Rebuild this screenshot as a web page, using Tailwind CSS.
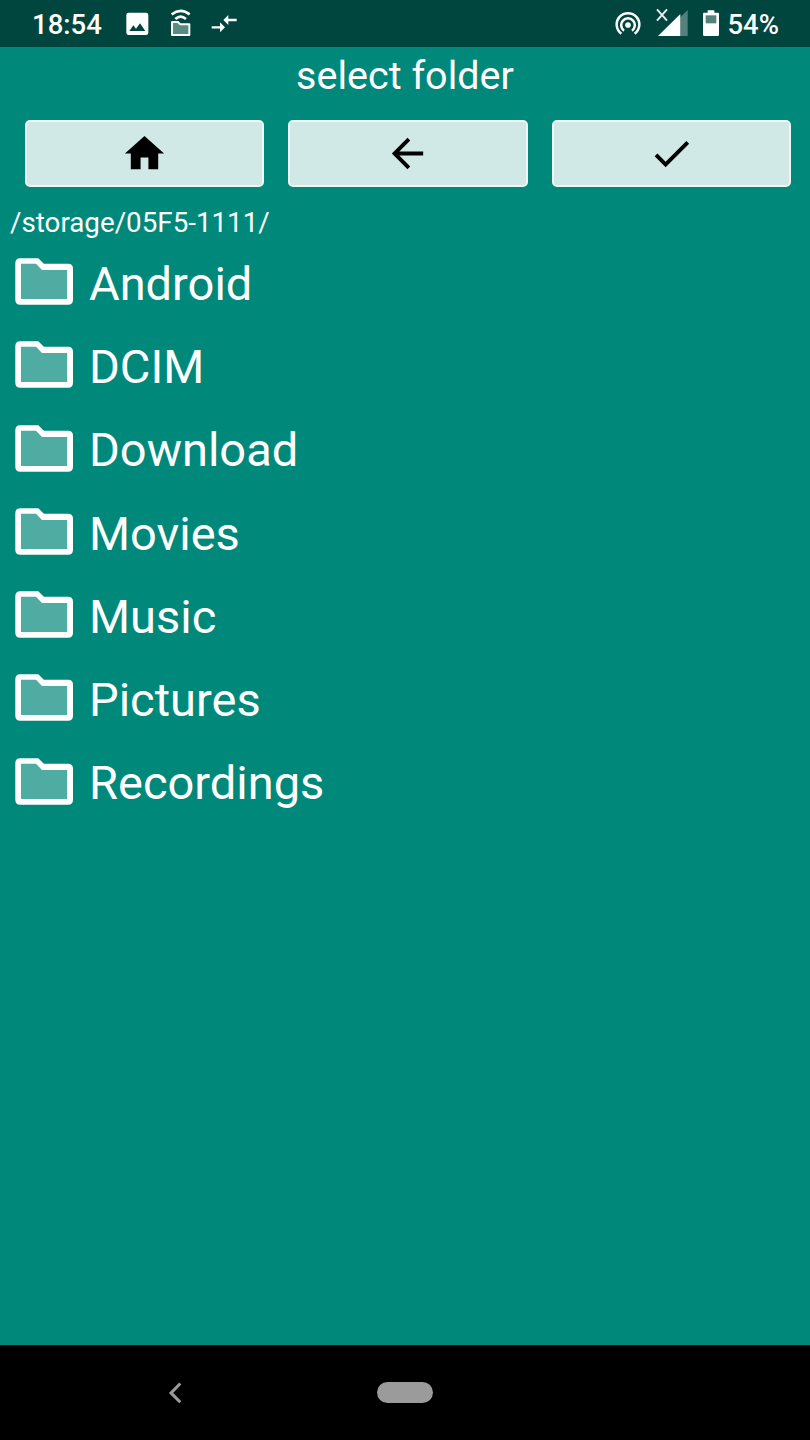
<!DOCTYPE html>
<html lang="en">
<head>
    <meta charset="UTF-8">
    <meta name="viewport" content="width=device-width, initial-scale=1">
    <title>select folder</title>
    <script src="https://cdn.jsdelivr.net/npm/@tailwindcss/browser@4"></script>
</head>
<body class="bg-black">
<div class="flex flex-col w-[810px] h-[1440px] overflow-hidden bg-[#00897b] text-white font-[Roboto,sans-serif]">
  <!-- Status bar -->
  <header class="flex items-center justify-between h-[47px] shrink-0 bg-[#00453e] pl-8 pr-[31px]">
    <div class="flex items-center">
      <span class="w-[94px] text-[27.5px] font-medium leading-[50px] pt-[3px]">18:54</span>
      <svg class="w-[23px] h-[47px]" viewBox="0 0 69 141" fill="none">
        <path fill="#fff" fill-rule="evenodd" d="M8 38h52q7 0 7 7v53q0 7-7 7H8q-7 0-7-7V45q0-7 7-7zM10 93h48L42 70 30 86l-8-10z"/>
      </svg>
      <svg class="w-5 h-[47px] ml-[22px]" viewBox="0 0 60 141" fill="none">
        <path d="M2 43Q29 22 56 43M13 57Q29 43 45 57" stroke="#fff" stroke-width="8"/>
        <path d="M3 66h18l7 7h27v32H3z" fill="#5b8983" stroke="#fff" stroke-width="6" stroke-linejoin="round"/>
      </svg>
      <svg class="w-[26px] h-[47px] ml-5" viewBox="0 0 78 141" fill="none">
        <path d="M2 82h31M77 60H46" stroke="#fff" stroke-width="7"/>
        <path d="M27 67l15 15-15 15zM52 45L37 60l15 15z" fill="#fff"/>
      </svg>
    </div>
    <div class="flex items-center">
      <svg class="w-[26px] h-[47px]" viewBox="0 0 78 141" fill="none">
        <circle cx="39" cy="75" r="8.5" fill="#fff"/>
        <path d="M19 101a34 34 0 1 1 40 0M27 92a20.5 20.5 0 1 1 24 0" stroke="#fff" stroke-width="7.5"/>
      </svg>
      <svg class="w-8 h-[47px] ml-[15px]" viewBox="0 0 96 141" fill="none">
        <path d="M95 30v78H73V52z" fill="#53817c"/>
        <path d="M6 108l67-66v66z" fill="#fff"/>
        <path d="M3 28l30 34M33 28L3 62" stroke="#e4eeec" stroke-width="6"/>
      </svg>
      <svg class="w-4 h-[47px] ml-[15px]" viewBox="0 0 48 141">
        <path d="M14 31h20v7h11q3 0 3 4v62q0 4-4 4H4q-4 0-4-4V42q0-4 3-4h11z" fill="#fff"/>
        <path d="M8 46h32v24H8z" fill="#53817c"/>
      </svg>
      <span class="ml-2 text-[27.5px] font-medium leading-[50px] pt-[3px]">54%</span>
    </div>
  </header>

  <h1 class="text-[39.5px] leading-[58px] text-center">select folder</h1>

  <!-- Toolbar -->
  <div class="grid grid-cols-3 gap-[24px] pt-[15px] pl-[24.5px] pr-[19px]">
    <button class="flex items-center justify-center h-[67px] rounded-[5px] border-2 border-[#edf7f5] bg-[#d0e9e6]">
      <svg class="w-[47px] h-[47px]" viewBox="0 0 24 24" fill="#000"><path d="M10 20v-6h4v6h5v-8h3L12 3 2 12h3v8z"/></svg>
    </button>
    <button class="flex items-center justify-center h-[67px] rounded-[5px] border-2 border-[#edf7f5] bg-[#d0e9e6]">
      <svg class="w-[47px] h-[47px]" viewBox="0 0 24 24" fill="#000"><path d="M20 11H7.83l5.59-5.59L12 4l-8 8 8 8 1.41-1.41L7.83 13H20z"/></svg>
    </button>
    <button class="flex items-center justify-center h-[67px] rounded-[5px] border-2 border-[#edf7f5] bg-[#d0e9e6]">
      <svg class="w-[47px] h-[47px]" viewBox="0 0 24 24" fill="#000"><path d="M9 16.17L4.83 12l-1.42 1.41L9 19 21 7l-1.41-1.41z"/></svg>
    </button>
  </div>

  <p class="pt-4 pl-2.5 text-[27.75px] leading-[39px]">/storage/05F5-1111/</p>

  <ul class="grow text-[47px] leading-[56px]" id="folders"></ul>

  <!-- Navigation bar -->
  <nav class="flex items-center h-[95px] shrink-0 bg-black">
    <svg class="w-3.5 h-[22px] ml-[168px]" viewBox="0 0 14 22" fill="none">
      <path d="M12.3 1.5L3 10.9l9.3 9.4" stroke="#9b9b9b" stroke-width="3"/>
    </svg>
    <div class="w-14 h-[21px] ml-[195px] rounded-full bg-[#9b9b9b]"></div>
  </nav>
</div>
<script>
    const folders = ["Android", "DCIM", "Download", "Movies", "Music", "Pictures", "Recordings"];

    const list = document.getElementById("folders");
    for (const name of folders) {
      list.innerHTML += `
        <li class="flex items-center h-[83.25px] pl-[15px]">
          <svg class="w-[58px] h-[47px] mb-[4px] mr-4" viewBox="0 0 58 47">
            <path d="M4 4h20l5 6h26v33H4z" fill="#4eaca2"/>
            <path fill="#fff" fill-rule="evenodd" d="M5.3.2h18l5.6 5.6H53q5 0 5 5v31q0 5-5 5H5.3q-5 0-5-5V5.2q0-5 5-5zM6 5.8V41h46.2V12H27l-6-6.2z"/>
          </svg>
          <span class="pt-[0.5px]">${name}</span>
        </li>`;
    }
</script>
</body>
</html>
